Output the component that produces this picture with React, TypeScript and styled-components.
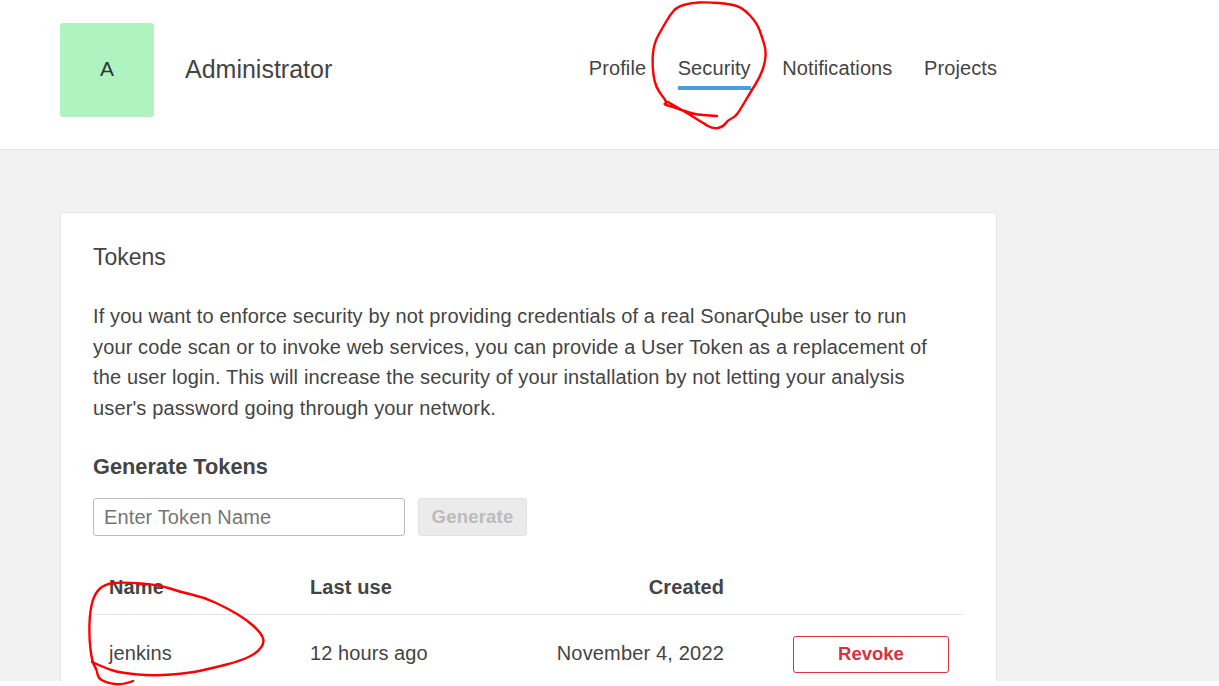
import React from "react";
import styled, { createGlobalStyle } from "styled-components";

const Global = createGlobalStyle`
  html, body { margin: 0; padding: 0; background: #fff; overflow: hidden; }
  body { font-family: "Liberation Sans", Arial, sans-serif; color: #444; }
`;

const Page = styled.div`
  position: relative;
  width: 1219px;
  height: 686px;
  overflow: hidden;
  background: #fff;
`;

const Content = styled.div`
  height: 681px;
  overflow: hidden;
  background: #f2f2f2;
`;

const Header = styled.header`
  height: 149px;
  background: #fff;
  border-bottom: 1px solid #e6e6e6;
  display: flex;
  padding-left: 60px;
  padding-right: 222px;
`;

const Identity = styled.div`
  width: 513px;
  height: 92px;
  margin-top: 23px;
  display: flex;
  align-items: flex-start;
  gap: 31px;
`;

const Avatar = styled.div`
  width: 94px;
  height: 94px;
  flex: none;
  border-radius: 3px;
  background: #aef3c0;
  color: #333;
  font-size: 21px;
  line-height: 92px;
  text-align: center;
`;

const UserName = styled.h1`
  margin: 0;
  font-weight: 400;
  font-size: 25px;
  line-height: 92px;
  color: #444;
`;

const Nav = styled.nav`
  flex: 1;
  display: flex;
  justify-content: flex-end;
  gap: 31.5px;
`;

const NavItem = styled.a<{ $active?: boolean }>`
  height: 90px;
  box-sizing: border-box;
  padding-top: 56px;
  font-size: 20px;
  line-height: 24px;
  letter-spacing: 0.1px;
  color: #444;
  border-bottom: 4px solid ${(p) => (p.$active ? "#4b9fd5" : "transparent")};
`;

const Main = styled.main`
  padding: 62px 222px 0 60px;
`;

const Card = styled.section`
  background: #fff;
  border: 1px solid #e6e6e6;
  border-radius: 3px;
  padding: 31px 32px 0;
  height: 600px;
`;

const CardTitle = styled.h2`
  margin: 0;
  font-weight: 400;
  font-size: 23px;
  line-height: 26px;
  color: #444;
`;

const Intro = styled.p`
  margin: 31px 0 0;
  font-size: 20px;
  line-height: 30.67px;
  letter-spacing: 0.13px;
  color: #444;
  width: 840px;
`;

const SubTitle = styled.h3`
  margin: 30px 0 0;
  font-size: 21.75px;
  line-height: 26px;
  font-weight: 700;
  color: #444;
`;

const Form = styled.form`
  display: flex;
  gap: 13px;
  margin-top: 18px;
`;

const Input = styled.input`
  width: 312px;
  height: 38px;
  box-sizing: border-box;
  border: 1px solid #bbb;
  border-radius: 3px;
  padding: 2px 10px 0;
  font: 20px "Liberation Sans", Arial, sans-serif;
  letter-spacing: 0.12px;
  &::placeholder { color: #757575; opacity: 1; }
`;

const GenerateButton = styled.button`
  width: 109px;
  height: 38px;
  border: 1px solid #e0e0e0;
  border-radius: 3px;
  background: #ebebeb;
  color: #bbb;
  font: 700 18.5px "Liberation Sans", Arial, sans-serif;
  letter-spacing: 0.2px;
  padding: 0;
`;

const Table = styled.table`
  width: 871px;
  border-collapse: collapse;
  margin-top: 24px;
  table-layout: fixed;
`;

const Th = styled.th<{ $w: number; $right?: boolean }>`
  width: ${(p) => p.$w}px;
  height: 55px;
  box-sizing: border-box;
  padding: 1px 0 0 ${(p) => (p.$right ? 0 : 16)}px;
  text-align: ${(p) => (p.$right ? "right" : "left")};
  font-size: 20px;
  font-weight: 700;
  letter-spacing: 0.1px;
  color: #444;
  border-bottom: 1px solid #e6e6e6;
`;

const Td = styled.td<{ $right?: boolean }>`
  height: 76px;
  padding: 0 0 0 ${(p) => (p.$right ? 0 : 16)}px;
  text-align: ${(p) => (p.$right ? "right" : "left")};
  font-size: 20px;
  letter-spacing: ${(p) => (p.$right ? 0.17 : 0.08)}px;
  color: #444;
`;

const RevokeButton = styled.button`
  display: block;
  margin: 2px 15px 0 auto;
  width: 156px;
  height: 37px;
  background: #fff;
  border: 1px solid #d4333f;
  border-radius: 3px;
  color: #d4333f;
  font: 700 18.5px "Liberation Sans", Arial, sans-serif;
  padding: 0;
`;

const Scribble = styled.svg`
  position: absolute;
  inset: 0;
  pointer-events: none;
`;

type Pt = [number, number];

const smooth = (pts: Pt[]) => {
  let d = `M${pts[0][0]} ${pts[0][1]}`;
  for (let i = 1; i < pts.length - 1; i++) {
    const mx = (pts[i][0] + pts[i + 1][0]) / 2;
    const my = (pts[i][1] + pts[i + 1][1]) / 2;
    d += ` Q${pts[i][0]} ${pts[i][1]} ${mx} ${my}`;
  }
  const last = pts[pts.length - 1];
  return `${d} L${last[0]} ${last[1]}`;
};

const securityRing: Pt[] = [
  [717, 116], [700, 115], [690, 113], [673, 107], [663, 104], [668, 103], [655, 87], [652, 63], [654, 43],
  [663, 27], [670, 15], [677, 7], [690, 3], [707, 2], [730, 4], [743, 8], [757, 23], [762, 37],
  [766, 50], [765, 63], [760, 77], [750, 93], [740, 110], [735, 117], [728, 120], [723, 127],
  [713, 129], [703, 123], [687, 113], [668, 102],
];

const jenkinsRing: Pt[] = [
  [133, 681], [123, 685], [107, 683], [98, 678], [97, 670], [92, 662], [89, 637], [90, 610], [95, 593],
  [105, 584], [123, 582], [160, 585], [180, 592], [203, 597], [227, 608], [247, 620], [260, 632],
  [265, 642], [257, 653], [240, 661], [213, 668], [190, 673], [153, 676], [123, 673], [110, 670], [92, 662],
];

export default function App() {
  return (
    <Page>
      <Global />
      <Content>
        <Header>
          <Identity>
            <Avatar>A</Avatar>
            <UserName>Administrator</UserName>
          </Identity>
          <Nav>
            <NavItem>Profile</NavItem>
            <NavItem $active>Security</NavItem>
            <NavItem>Notifications</NavItem>
            <NavItem>Projects</NavItem>
          </Nav>
        </Header>
        <Main>
          <Card>
            <CardTitle>Tokens</CardTitle>
            <Intro>
              If you want to enforce security by not providing credentials of a real SonarQube user to run
              your code scan or to invoke web services, you can provide a User Token as a replacement of
              the user login. This will increase the security of your installation by not letting your analysis
              user's password going through your network.
            </Intro>
            <SubTitle>Generate Tokens</SubTitle>
            <Form>
              <Input placeholder="Enter Token Name" />
              <GenerateButton type="button" disabled>Generate</GenerateButton>
            </Form>
            <Table>
              <thead>
                <tr>
                  <Th $w={201}>Name</Th>
                  <Th $w={200}>Last use</Th>
                  <Th $w={230} $right>Created</Th>
                  <Th $w={240} />
                </tr>
              </thead>
              <tbody>
                <tr>
                  <Td>jenkins</Td>
                  <Td>12 hours ago</Td>
                  <Td $right>November 4, 2022</Td>
                  <Td $right><RevokeButton type="button">Revoke</RevokeButton></Td>
                </tr>
              </tbody>
            </Table>
          </Card>
        </Main>
      </Content>
      <Scribble width="1219" height="686" viewBox="0 0 1219 686" fill="none" stroke="#f00" strokeWidth="2.4" strokeLinejoin="round" strokeLinecap="round">
        <path d={smooth(securityRing)} />
        <path d={smooth(jenkinsRing)} />
      </Scribble>
    </Page>
  );
}
